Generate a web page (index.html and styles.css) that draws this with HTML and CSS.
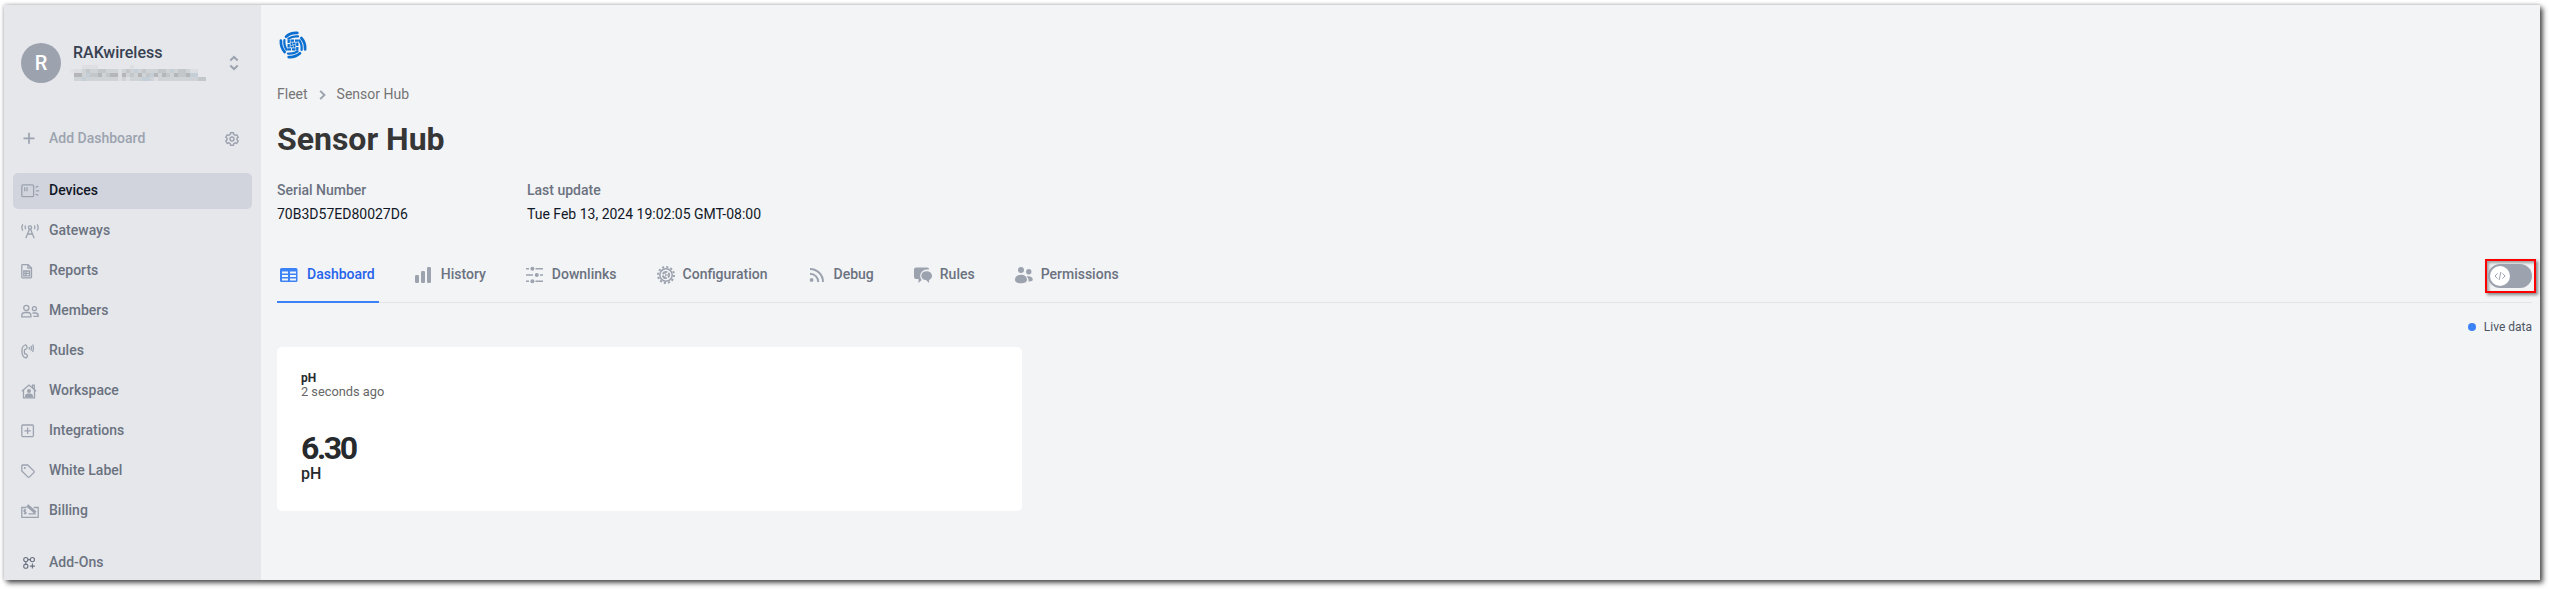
FILE: index.html
```
<!DOCTYPE html>
<html lang="en">
<head>
<meta charset="utf-8">
<title>Sensor Hub</title>
<link rel="stylesheet" href="styles.css">
</head>
<body>
<div class="window">
  <aside class="sidebar">
    <div class="account">
      <div class="avatar">R</div>
      <div class="account-info">
        <div class="account-name">RAKwireless</div>
        <svg class="redacted" width="136" height="16" viewBox="0 0 136 16" shape-rendering="crispEdges" fill="none" stroke-width="4">
          <path stroke="#dddfe2" d="M12 2h16M60 2h4"/>
          <path stroke="#e0e2e5" d="M0 6h4"/>
          <path stroke="#d0d3d6" d="M4 6h124M4 10h44M52 10h76M4 14h132"/>
          <path stroke="#c3c7ca" d="M16 6h4M28 6h8M56 6h4M72 6h4M88 6h8M108 6h8M20 10h8M36 10h4M60 10h4M76 10h4M96 10h4M108 10h8M128 14h8"/>
          <path stroke="#b4b6b8" d="M4 10h8M28 10h4M40 10h8M52 10h4M68 10h4M84 10h4M92 10h4M104 10h4M116 10h4"/>
          <path stroke="#c3ced6" d="M16 10h4M64 6h4M80 10h4M100 6h4M120 10h8M12 14h4M72 14h8"/>
          <path stroke="#dcdee1" d="M4 6h8M48 6h4M48 10h4M48 14h4M56 14h4M84 14h4M120 6h8"/>
        </svg>
      </div>
      <svg class="updown" width="10" height="16" viewBox="0 0 10 16"><path d="M1.300 5.400 5 1.900l3.700 3.500M1.300 10.600 5 14.100l3.700-3.500"/></svg>
    </div>

    <div class="add-row">
      <svg class="icon" width="20" height="20" viewBox="0 0 20 20"><path d="M8 4.800v11M2.500 10.300h11"/></svg>
      <span class="grow">Add Dashboard</span>
      <svg class="icon gear" width="14" height="14" viewBox="0 0 14 14"><path d="M5.600 .8h2.800l.4 1.700 1.300.8 1.700-.5 1.400 2.400-1.300 1.200v1.400l1.300 1.100-1.400 2.400-1.700-.5-1.300.8-.4 1.700H5.600l-.4-1.700-1.300-.8-1.700.5L.8 8.900l1.300-1.100V6.400L.8 5.200l1.400-2.400 1.700.5 1.300-.8z"/><circle cx="7" cy="7" r="2"/></svg>
    </div>

    <nav class="menu">
      <a class="item active">
        <svg class="icon" width="20" height="20" viewBox="0 0 20 20"><rect x=".8" y="3.800" width="11.800" height="11.800" rx="1.200"/><path d="M3.700 6.200v4M6 6.200v4M14.500 6.300l2.800-1.200M14.800 9.800h3.400M14.500 13.200l2.800 1.200"/></svg>
        <span>Devices</span>
      </a>
      <a class="item">
        <svg class="icon" width="20" height="20" viewBox="0 0 20 20"><circle cx="9" cy="6.500" r="1.600"/><path d="M8.500 8 4.800 17.200M9.500 8l3.700 9.200M6.500 13h5M4.600 4.500c-.6 1.200-.6 2.400 0 3.600M13.400 4.500c.6 1.200.6 2.400 0 3.600M1.800 3.400C.6 5.400.6 7.600 1.800 9.600M16.200 3.400c1.200 2 1.200 4.200 0 6.200"/></svg>
        <span>Gateways</span>
      </a>
      <a class="item">
        <svg class="icon" width="20" height="20" viewBox="0 0 20 20"><path d="M.8 4.400c0-.5.300-.8.800-.8h5.500l3.400 3.400v9c0 .5-.3.800-.8.800H1.600c-.5 0-.8-.3-.8-.8zM6.900 3.800v3.400h3.400M2.800 10h5.800v4.800H2.800zM2.800 12.400h5.800M5 10v4.800"/></svg>
        <span>Reports</span>
      </a>
      <a class="item">
        <svg class="icon" width="20" height="20" viewBox="0 0 20 20"><circle cx="5.300" cy="6.900" r="2.600"/><path d="M.8 15.800v-1.300c0-2 1.400-3 3.200-3h2.700c1.800 0 3.200 1 3.200 3v1.300z"/><circle cx="13.400" cy="7.700" r="2"/><path d="M11.500 12h2.700c1.700 0 3 .8 3 2.600v.7h-4.800"/></svg>
        <span>Members</span>
      </a>
      <a class="item">
        <svg class="icon" width="20" height="20" viewBox="0 0 20 20"><path d="M4.200 4C1.900 4.700.8 7 .9 10.200c.1 3.200 1.200 5.700 3.300 6.500.9.300 2-.6 2.200-1.600.2-.9-1.200-2.400-1.900-2.100-.9.300-1.100-.9-1.100-2.500s0-2.300.9-2.200c1.200.2 2-1.300 1.600-2.700C5.600 4.500 5 3.800 4.200 4z"/><path d="M8.300 6v2.500M10 4.800c.7 1.600.7 3.300 0 4.900M11.700 3.600c1.100 2.400 1.100 4.900 0 7.300"/></svg>
        <span>Rules</span>
      </a>
      <a class="item">
        <svg class="icon" width="20" height="20" viewBox="0 0 20 20"><path d="M.8 10.200 8 4l7.200 6.200M2.500 9v7.800h11V9M11.500 6.800V4.200h1.800v4.200"/><circle class="solid" cx="8" cy="9.900" r="2"/><path class="solid" d="M4 16.500v-1c0-1.900 1.200-3 2.800-3h2.400c1.600 0 2.800 1.100 2.800 3v1z"/></svg>
        <span>Workspace</span>
      </a>
      <a class="item">
        <svg class="icon" width="20" height="20" viewBox="0 0 20 20"><rect x=".8" y="4" width="11.600" height="11.600" rx="1"/><path d="M6.600 6.600v6.400M3.400 9.800h6.400"/></svg>
        <span>Integrations</span>
      </a>
      <a class="item">
        <svg class="icon" width="20" height="20" viewBox="0 0 20 20"><path d="M.8 4.900c0-.5.400-.9.900-.9h5l6.300 6.100c.4.400.4.900 0 1.300l-4.700 4.700c-.4.400-.9.400-1.300 0L.8 9.900z"/><circle class="solid" cx="3.800" cy="7" r="1"/></svg>
        <span>White Label</span>
      </a>
      <a class="item">
        <svg class="icon" width="20" height="20" viewBox="0 0 20 20"><path d="M5.500 6.500H.8v9.800h16.400V6.500h-4.500"/><path d="M5 9c-1.400-.4-2.200.2-2.100.9.100 1 2.200.7 2.200 1.800 0 .9-1 1.200-2.300.8M4 8v5.300M7.500 12.800h7.300"/><path d="m6.200 4.300 8.300 7.300" stroke-width="3"/></svg>
        <span>Billing</span>
      </a>
      <a class="item addons">
        <svg class="icon" width="20" height="20" viewBox="0 0 20 20"><circle cx="4.800" cy="6.600" r="2.100"/><circle cx="11.400" cy="6.600" r="2.100"/><circle cx="4.800" cy="13.200" r="2.100"/><path d="M11.400 10.600v5M8.900 13.100h5M6.900 6.600h2.400M4.800 8.700v2.400"/></svg>
        <span>Add-Ons</span>
      </a>
    </nav>
  </aside>

  <main class="main">
    <svg class="logo" width="28" height="28" viewBox="-14 -14 28 28">
      <defs>
        <g id="blade">
          <path stroke-width="2.700" d="M-7-8.300Q-2.500-12.500 4.300-12.100"/>
          <path stroke-width="2.200" d="M-4.600-6.400Q-.5-9.200 5-8.600"/>
          <path stroke-width="2.300" stroke-linecap="butt" d="M-2.600-4.300H1M1.900-4.300H5.600"/>
          <path stroke-width="1.900" stroke-linecap="butt" d="M-.2-1.500H2.600"/>
        </g>
      </defs>
      <use href="#blade"/><use href="#blade" transform="rotate(90)"/><use href="#blade" transform="rotate(180)"/><use href="#blade" transform="rotate(270)"/>
    </svg>

    <div class="crumbs">
      <span>Fleet</span>
      <svg width="7" height="10" viewBox="0 0 7 10"><path d="M1.200.9 5.400 5 1.200 9.100"/></svg>
      <span>Sensor Hub</span>
    </div>
    <h1 class="title">Sensor Hub</h1>

    <dl class="facts">
      <div class="fact serial"><dt>Serial Number</dt><dd>70B3D57ED80027D6</dd></div>
      <div class="fact"><dt>Last update</dt><dd>Tue Feb 13, 2024 19:02:05 GMT-08:00</dd></div>
    </dl>

    <div class="tabbar">
      <div class="tabs">
        <a class="tab current">
          <svg width="18" height="18" viewBox="0 0 18 18"><path fill-rule="evenodd" d="M1.500 2h14.500q1.500 0 1.500 1.500v11q0 1.500-1.500 1.500H1.500Q0 16 0 14.500v-11Q0 2 1.500 2zM2 5.500v2h6v-2zM10 5.500v2h6v-2zM2 9v2h6V9zM10 9v2h6V9zM2 12.500v2h6v-2zM10 12.500v2h6v-2z"/></svg>
          <span>Dashboard</span>
        </a>
        <a class="tab">
          <svg width="18" height="18" viewBox="0 0 18 18"><rect x="0" y="9" width="4" height="8" rx="1.200"/><rect x="6" y="5" width="4" height="12" rx="1.200"/><rect x="12" y="1" width="4" height="16" rx="1.200"/></svg>
          <span>History</span>
        </a>
        <a class="tab">
          <svg width="18" height="18" viewBox="0 0 18 18"><path d="M0 2h3v1.500H0zM9.500 2H17v1.500H9.500zM0 8.300h7v1.500H0zM14 8.300h3v1.500h-3zM0 14.600h3v1.500H0zM9.500 14.600H17v1.500H9.500z"/><circle cx="6.400" cy="2.800" r="2"/><circle cx="10.800" cy="9" r="2"/><circle cx="6.400" cy="15.300" r="2"/></svg>
          <span>Downlinks</span>
        </a>
        <a class="tab">
          <svg width="18" height="18" viewBox="0 0 18 18"><g class="line"><circle cx="9" cy="9" r="6.200" stroke-width="1.500"/><circle cx="9" cy="9" r="8" stroke-width="2" stroke-dasharray="2.100 2.089"/><circle cx="9" cy="9" r="3.200" stroke-width="1.800" stroke-dasharray="5.400 1.300" stroke-dashoffset="2.700"/><path d="M9 9h2.800M9 9 7.500 6.500M9 9l-1.500 2.500" stroke-width="1"/></g></svg>
          <span>Configuration</span>
        </a>
        <a class="tab">
          <svg width="18" height="18" viewBox="0 0 18 18"><circle cx="3.600" cy="14" r="1.900"/><g class="line" stroke-width="2"><path d="M2 7.700A8.200 8.200 0 0 1 10.200 16M2 3A13 13 0 0 1 15 16"/></g></svg>
          <span>Debug</span>
        </a>
        <a class="tab">
          <svg width="18" height="18" viewBox="0 0 18 18"><path d="M2 1.500h11.200q1.800 0 2 2-7.800-.7-9 5.500-.3 3 1.500 5L4.500 17v-4H2Q0 13 0 11V3.500q0-2 2-2z"/><path d="M12.500 5.300c3.300 0 5.500 2 5.500 4.500 0 2-1.100 3.400-2.900 4.100V17l-3.200-2.900C9 14 7.300 12.200 7.300 9.800c0-2.500 1.900-4.500 5.200-4.500z"/></svg>
          <span>Rules</span>
        </a>
        <a class="tab">
          <svg width="18" height="18" viewBox="0 0 18 18"><circle cx="6" cy="4" r="3"/><circle cx="13.800" cy="5.800" r="2.700"/><path d="M6 8.800c3.600 0 6 2 6 5 0 2.500-2.500 3.500-6 3.500s-6-1-6-3.500c0-3 2.400-5 6-5zM11.500 10.500c3.800-.8 6.300.9 6.300 3.300 0 1.300-1.800 1.700-4.300 1.600.2-2.200-.4-3.700-2-4.900z"/></svg>
          <span>Permissions</span>
        </a>
      </div>
      <div class="marker">
        <div class="toggle"><div class="knob"><svg width="12" height="10" viewBox="0 0 12 10"><path d="M3.500 2.400 1 5l2.500 2.600M8.500 2.400 11 5 8.500 7.600M6.900 1 5.100 9"/></svg></div></div>
      </div>
    </div>

    <div class="live"><i class="dot"></i><span>Live data</span></div>

    <section class="card">
      <div class="card-title">pH</div>
      <div class="card-time">2 seconds ago</div>
      <div class="value">6.30</div>
      <div class="unit">pH</div>
    </section>
  </main>
</div>
</body>
</html>
```
FILE: styles.css
```
* { box-sizing: border-box; }
body {
  margin: 0;
  padding: 5px 9px 9px 4px;
  height: 589px;
  overflow: hidden;
  background: #fff;
  font: 500 14px/20px Roboto, sans-serif;
  color: #6b7280;
}
.window {
  display: flex;
  height: 575px;
  background: #f3f4f6;
  box-shadow: 3px 3px 5px rgba(0, 0, 0, .65), 0 0 4px rgba(0, 0, 0, .3);
}
.sidebar {
  width: 257px;
  flex: none;
  padding: 38px 9px 0;
  background: #e5e7eb;
  overflow: hidden;
}
.account { display: flex; align-items: center; height: 40px; padding: 0 13px 0 8px; }
.avatar {
  width: 40px;
  height: 40px;
  border-radius: 50%;
  background: #9ca3af;
  color: #fff;
  font-size: 20px;
  line-height: 40px;
  text-align: center;
}
.account-info { flex: 1; height: 40px; padding-left: 12px; color: #374151; }
.account-name { font-size: 16px; line-height: 19px; }
.redacted { display: block; margin: 3px 0 0 -3px; }
.updown { fill: none; stroke: #9ca3af; stroke-width: 2; }
.add-row {
  display: flex;
  align-items: center;
  height: 36px;
  margin-top: 37px;
  padding: 0 13px 0 8px;
  color: #9ca3af;
}
.grow { flex: 1; }
.icon { flex: none; margin-right: 8px; fill: none; stroke: #9ca3af; stroke-width: 1.3; }
.add-row .icon { stroke-width: 1.7; }
.add-row .gear { margin: 1px 0 0; stroke-width: 1.4; }
.icon .solid { fill: #9ca3af; stroke: none; }
.menu { display: flex; flex-direction: column; gap: 4px; margin-top: 17px; }
.item { display: flex; align-items: center; flex: none; height: 36px; padding: 0 8px; border-radius: 5px; }
.item span { margin-top: -2px; }
.active { background: #d1d4dc; color: #111827; }
.addons { margin-top: 12px; }
.addons .icon { stroke: #6b7280; stroke-width: 1.1; }

.main { flex: 1; padding: 26px 8px 0 16px; }
.logo { display: block; margin-left: 2px; fill: none; stroke: #0a6fd0; stroke-linecap: round; }
.crumbs { display: flex; align-items: center; gap: 11px; margin-top: 25px; font-weight: 400; color: #757575; }
.crumbs svg { margin-top: 2px; fill: none; stroke: #9ca3af; stroke-width: 2; }
.title { margin: 15px 0 0; font-size: 32px; line-height: 40px; font-weight: 700; color: #363636; }
.facts { display: flex; margin: 21px 0 0; }
.serial { width: 250px; }
.fact dd { margin: 4px 0 0; font-weight: 400; color: #111827; }
.tabbar {
  display: flex;
  justify-content: space-between;
  align-items: flex-end;
  height: 79px;
  border-bottom: 1px solid #e2e4e8;
}
.tabs { display: flex; gap: 32px; }
.tab {
  display: flex;
  align-items: flex-start;
  gap: 8px;
  height: 39px;
  margin-bottom: -1px;
  padding: 0 4px;
}
.tab svg { margin-top: 2px; fill: #9ca3af; }
.tab .line { fill: none; stroke: #9ca3af; }
.current { color: #2563eb; border-bottom: 2px solid #3b82f6; }
.current svg { margin-left: -1px; margin-right: 1px; fill: #3b82f6; }
.marker {
  width: 51px;
  height: 34px;
  margin: 0 -4px 9px 0;
  padding: 3px 2px 0 1px;
  border: 2px solid #f00;
  box-shadow: 2px 2px 3px rgba(0, 0, 0, .45), inset 2px 2px 3px rgba(0, 0, 0, .35);
}
.toggle { width: 44px; height: 24px; padding: 2px; border-radius: 12px; background: #9ca3af; }
.knob { display: flex; align-items: center; justify-content: center; width: 20px; height: 20px; border-radius: 50%; background: #fff; }
.knob svg { fill: none; stroke: #9ca3af; stroke-width: 1; }
.live {
  display: flex;
  justify-content: flex-end;
  align-items: center;
  gap: 8px;
  height: 20px;
  margin-top: 14px;
  font-size: 12px;
  font-weight: 400;
  color: #4b5563;
}
.dot { width: 8px; height: 8px; border-radius: 50%; background: #3b82f6; }
.card {
  width: 745px;
  height: 164px;
  margin-top: 10px;
  padding: 24px;
  border-radius: 5px;
  background: #fff;
  color: #262a2d;
}
.card-title { font-size: 12px; line-height: 14px; font-weight: 700; }
.card-time { font-size: 12.800px; line-height: 14px; font-weight: 400; color: #666; }
.value { margin-top: 29px; font-size: 32px; line-height: 40px; font-weight: 700; letter-spacing: -2.400px; }
.unit { margin-top: -4px; font-size: 16px; line-height: 20px; }
```
